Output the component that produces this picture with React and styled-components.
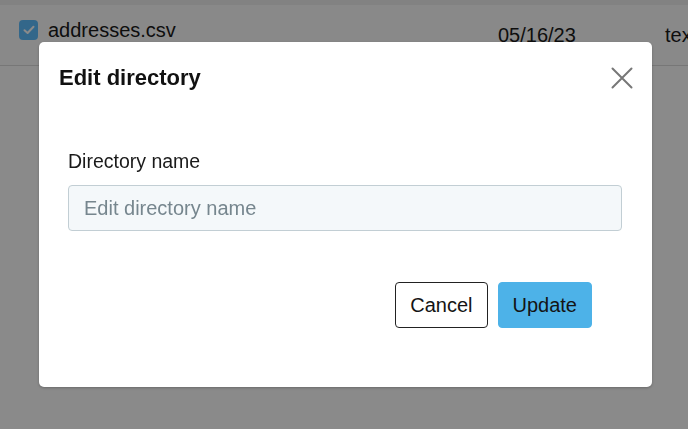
import React from "react";
import styled, { createGlobalStyle } from "styled-components";

const Global = createGlobalStyle`
  html, body { margin: 0; padding: 0; background: #ffffff; }
  body { font-family: "Liberation Sans", Arial, Helvetica, sans-serif; color: #1a1a1a; overflow: hidden; }
  * { box-sizing: border-box; }
`;

const Page = styled.div`
  width: 688px;
  height: 429px;
  background: #ffffff;
`;

const TopStrip = styled.div`
  height: 5px;
  background: #f0f0f0;
`;

const FileRow = styled.div`
  height: 61px;
  display: flex;
  align-items: flex-start;
  border-bottom: 1px solid #dcdcdc;
  background: #fdfdfd;
  white-space: nowrap;
  overflow: hidden;
`;

const Check = styled.span`
  margin: 15px 0 0 19px;
  width: 19px;
  height: 20px;
  border-radius: 4px;
  background: #5fbfff;
  display: flex;
  align-items: center;
  justify-content: center;
  flex: none;
`;

const FileName = styled.span`
  margin: 13px 0 0 10px;
  font-size: 20px;
  line-height: 24px;
  width: 450px;
  flex: none;
`;

const Cell = styled.span`
  margin-top: 18px;
  font-size: 20px;
  line-height: 24px;
  width: ${(p) => p.$w}px;
  flex: none;
`;

const Overlay = styled.div`
  position: fixed;
  inset: 0;
  background: rgba(0, 0, 0, 0.46);
  display: flex;
  align-items: flex-start;
  padding: 42px 0 0 39px;
`;

const Modal = styled.div`
  width: 613px;
  height: 345px;
  background: #ffffff;
  border-radius: 5px;
  box-shadow: 0 1px 3px rgba(0, 0, 0, 0.25);
  display: flex;
  flex-direction: column;
`;

const Header = styled.div`
  display: flex;
  align-items: center;
  justify-content: space-between;
  padding: 22px 19px 0 20px;
`;

const Title = styled.h2`
  margin: 0;
  font-size: 22px;
  line-height: 28px;
  font-weight: 700;
  color: #111111;
`;

const CloseButton = styled.button`
  border: none;
  background: transparent;
  padding: 0;
  width: 22px;
  height: 22px;
  display: flex;
  align-items: center;
  justify-content: center;
  cursor: pointer;
`;

const Body = styled.div`
  padding: 58px 30px 0 29px;
  display: flex;
  flex-direction: column;
`;

const Label = styled.label`
  font-size: 19.5px;
  line-height: 22px;
  color: #1a1a1a;
  margin-bottom: 13px;
`;

const Input = styled.input`
  width: 100%;
  height: 46px;
  border: 1px solid #c2ced4;
  border-radius: 4px;
  background: #f4f8fa;
  padding: 0 15px;
  font-family: inherit;
  font-size: 20px;
  color: #1a1a1a;
  outline: none;
  &::placeholder { color: #76868e; }
`;

const Footer = styled.div`
  display: flex;
  justify-content: flex-end;
  gap: 10px;
  padding: 51px 60px 0 0;
`;

const Button = styled.button`
  height: 46px;
  padding: 0 14px;
  border-radius: 4px;
  font-family: inherit;
  font-size: 20px;
  color: #141414;
  cursor: pointer;
  border: 1px solid ${(p) => (p.$primary ? "#4db2e8" : "#222222")};
  background: ${(p) => (p.$primary ? "#4db2e8" : "#ffffff")};
`;

export default function App() {
  return (
    <>
      <Global />
      <Page>
        <TopStrip />
        <FileRow>
          <Check>
            <svg width="12" height="10" viewBox="0 0 12 10">
              <path d="M1.5 5.2 L4.6 8 L10.5 1.8" fill="none" stroke="#ffffff" strokeWidth="2" strokeLinecap="round" strokeLinejoin="round" />
            </svg>
          </Check>
          <FileName>addresses.csv</FileName>
          <Cell $w={167}>05/16/23</Cell>
          <Cell $w={60}>text/csv</Cell>
        </FileRow>
      </Page>
      <Overlay>
        <Modal role="dialog" aria-labelledby="edit-dir-title">
          <Header>
            <Title id="edit-dir-title">Edit directory</Title>
            <CloseButton aria-label="Close">
              <svg width="22" height="22" viewBox="0 0 22 22">
                <path d="M1.5 1.5 L20.5 20.5 M20.5 1.5 L1.5 20.5" stroke="#777777" strokeWidth="2" strokeLinecap="round" />
              </svg>
            </CloseButton>
          </Header>
          <Body>
            <Label htmlFor="dirname">Directory name</Label>
            <Input id="dirname" placeholder="Edit directory name" />
          </Body>
          <Footer>
            <Button>Cancel</Button>
            <Button $primary>Update</Button>
          </Footer>
        </Modal>
      </Overlay>
    </>
  );
}
